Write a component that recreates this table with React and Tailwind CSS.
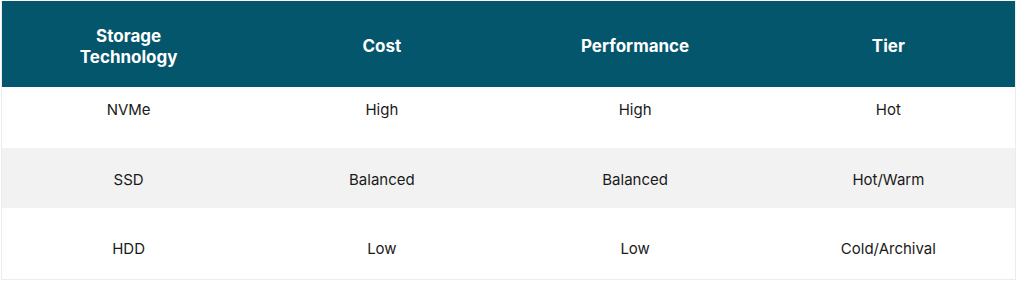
const rows = [
    { name: 'NVMe', cost: 'High', perf: 'High', tier: 'Hot', cls: 'h-[61px] bg-white items-start pt-[13px]' },
    { name: 'SSD', cost: 'Balanced', perf: 'Balanced', tier: 'Hot/Warm', cls: 'h-[60px] bg-[#f2f2f2] items-center pt-[3px]' },
    { name: 'HDD', cost: 'Low', perf: 'Low', tier: 'Cold/Archival', cls: 'h-[71px] bg-white items-start pt-[31px]' },
];

const headers = ['Storage Technology', 'Cost', 'Performance', 'Tier'];

const App = () => {
    return (
        <div className="w-[1017px] h-[287px] bg-white pt-px pl-px" style={{ fontFamily: 'Inter, "Noto Sans", sans-serif' }}>
            <div className="w-[1015px] border-l border-r border-b border-[#ececec]">
                {/* header */}
                <div className="grid grid-cols-4 h-[86px] bg-[#03566c] items-center pt-[5px]">
                    {headers.map((h) => (
                        <div key={h} className="flex justify-center">
                            <span className={`text-white font-bold text-[17px] leading-[21px] text-center ${h === 'Storage Technology' ? 'w-[110px]' : ''}`}>
                                {h}
                            </span>
                        </div>
                    ))}
                </div>
                {/* body rows */}
                {rows.map((r) => (
                    <div key={r.name} className={`grid grid-cols-4 ${r.cls}`}>
                        {[r.name, r.cost, r.perf, r.tier].map((c, i) => (
                            <div key={i} className="text-center text-[15px] leading-[20px] text-[#1a1a1a]">
                                {c}
                            </div>
                        ))}
                    </div>
                ))}
            </div>
        </div>
    );
};

export default App;
